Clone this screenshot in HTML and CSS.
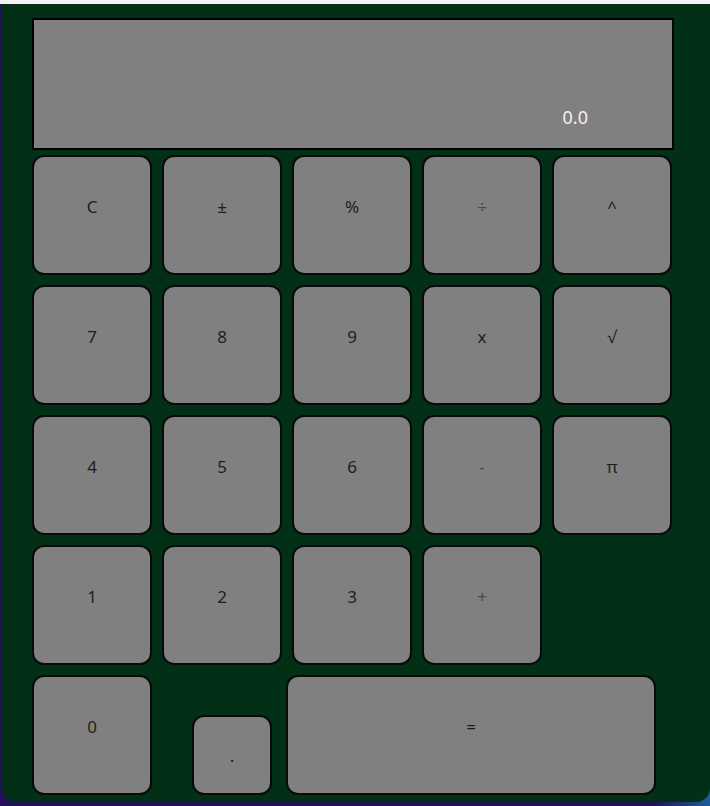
FILE: index.html
```html
<!DOCTYPE html>
<html>
<head>
<meta charset="utf-8">
<link rel="stylesheet" href="styles.css">
</head>
<body>
<div class="topbar"></div>
<div class="app">
  <div class="display"><span class="readout">0.0</span></div>
  <div class="keys">
    <div class="key">C</div>
    <div class="key">±</div>
    <div class="key">%</div>
    <div class="key op">÷</div>
    <div class="key">^</div>
    <div class="key">7</div>
    <div class="key">8</div>
    <div class="key">9</div>
    <div class="key">x</div>
    <div class="key">√</div>
    <div class="key">4</div>
    <div class="key">5</div>
    <div class="key">6</div>
    <div class="key op">-</div>
    <div class="key">π</div>
    <div class="key">1</div>
    <div class="key">2</div>
    <div class="key">3</div>
    <div class="key op">+</div>
  </div>
  <div class="lastrow">
    <div class="key">0</div>
    <div class="key dot">.</div>
    <div class="key equals">=</div>
  </div>
</div>
</body>
</html>
```
FILE: styles.css
```css
html, body {
  margin: 0;
  padding: 0;
}
body {
  width: 710px;
  height: 806px;
  overflow: hidden;
  background: linear-gradient(to right, #241058 0%, #241058 92%, #1d5c9c 100%);
  font-family: "Noto Sans", "Open Sans", sans-serif;
}
.topbar {
  height: 4px;
  background: #f4f1f7;
}
.app {
  margin-left: 2px;
  width: 708px;
  height: 798px;
  box-sizing: border-box;
  background: #013016;
  border-radius: 0 0 14px 14px;
  padding: 14px 0 0 30px;
}
.display {
  width: 642px;
  height: 132px;
  box-sizing: border-box;
  border: 2px solid #000;
  background: #808080;
  display: flex;
  justify-content: flex-end;
  align-items: flex-end;
  padding: 0 84px 20px 0;
}
.readout {
  color: #f0f0f0;
  font-size: 18px;
  line-height: 22px;
}
.keys {
  margin: 5px 0 0 0;
  display: grid;
  grid-template-columns: repeat(5, 120px);
  grid-auto-rows: 120px;
  gap: 10px;
}
.key {
  box-sizing: border-box;
  width: 120px;
  height: 120px;
  background: #808080;
  border: 2px solid #0a0a0a;
  border-radius: 12px;
  display: flex;
  justify-content: center;
  align-items: center;
  padding-bottom: 17px;
  color: #1e1e1e;
  font-size: 17px;
}
.key.op {
  color: #484848;
}
.lastrow {
  margin: 10px 0 0 0;
  display: flex;
  align-items: flex-end;
}
.key.dot {
  width: 80px;
  height: 80px;
  margin-left: 40px;
  padding-bottom: 0;
  padding-top: 0;
  align-items: center;
}
.key.equals {
  width: 370px;
  margin-left: 14px;
}
```
